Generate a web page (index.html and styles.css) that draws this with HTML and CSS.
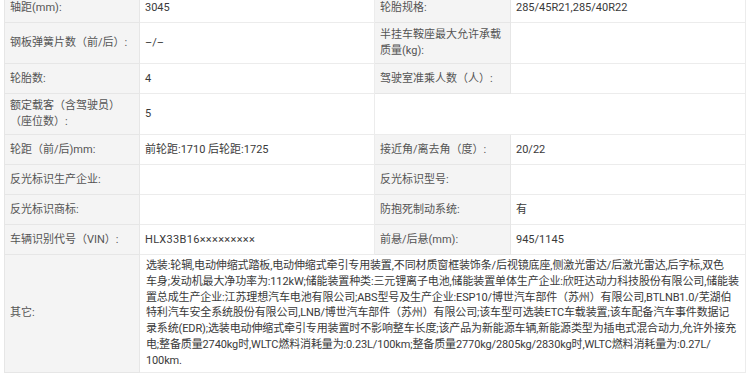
FILE: index.html
```html
<!DOCTYPE html>
<html lang="zh">
<head>
<meta charset="utf-8">
<title>参数</title>
<link rel="stylesheet" href="styles.css">
</head>
<body>
<table class="spec">
  <colgroup>
    <col class="c-label">
    <col class="c-value">
    <col class="c-label2">
    <col class="c-value">
  </colgroup>
  <tr>
    <th>轴距(mm):</th><td>3045</td>
    <th>轮胎规格:</th><td>285/45R21,285/40R22</td>
  </tr>
  <tr>
    <th>钢板弹簧片数（前/后）:</th><td>–/–</td>
    <th>半挂车鞍座最大允许承载质量(kg):</th><td></td>
  </tr>
  <tr>
    <th>轮胎数:</th><td>4</td>
    <th>驾驶室准乘人数（人）:</th><td></td>
  </tr>
  <tr>
    <th>额定载客（含驾驶员）（座位数）:</th><td>5</td>
    <td colspan="2"></td>
  </tr>
  <tr>
    <th>轮距（前/后)mm:</th><td>前轮距:1710 后轮距:1725</td>
    <th>接近角/离去角（度）:</th><td>20/22</td>
  </tr>
  <tr>
    <th>反光标识生产企业:</th><td></td>
    <th>反光标识型号:</th><td></td>
  </tr>
  <tr>
    <th>反光标识商标:</th><td></td>
    <th>防抱死制动系统:</th><td>有</td>
  </tr>
  <tr>
    <th>车辆识别代号（VIN）:</th><td class="vin">HLX33B16×××××××××</td>
    <th>前悬/后悬(mm):</th><td>945/1145</td>
  </tr>
  <tr>
    <th>其它:</th>
    <td colspan="3" class="long">选装:轮辋,电动伸缩式踏板,电动伸缩式牵引专用装置,不同材质窗框装饰条/后视镜底座,侧激光雷达/后激光雷达,后字标,双色<br>车身;发动机最大净功率为:112kW;储能装置种类:三元锂离子电池,储能装置单体生产企业:欣旺达动力科技股份有限公司,储能装<br>置总成生产企业:江苏理想汽车电池有限公司;ABS型号及生产企业:ESP10/博世汽车部件（苏州）有限公司,BTLNB1.0/芜湖伯<br>特利汽车安全系统股份有限公司,LNB/博世汽车部件（苏州）有限公司;该车型可选装ETC车载装置;该车配备汽车事件数据记<br>录系统(EDR);选装电动伸缩式牵引专用装置时不影响整车长度;该产品为新能源车辆,新能源类型为插电式混合动力,允许外接充<br>电;整备质量2740kg时,WLTC燃料消耗量为:0.23L/100km;整备质量2770kg/2805kg/2830kg时,WLTC燃料消耗量为:0.27L/<br>100km.</td>
  </tr>
</table>
</body>
</html>
```
FILE: styles.css
```css
html, body {
  margin: 0;
  padding: 0;
  background: #ffffff;
}

body {
  font-family: Roboto, "Noto Sans CJK SC", sans-serif;
  font-size: 11px;
  color: #333333;
}

.spec {
  margin: -8px 4px 0 4px;
  width: 742px;
  table-layout: fixed;
  border-collapse: collapse;
}

.c-label { width: 135px; }
.c-label2 { width: 136px; }
.c-value { width: 235px; }

.spec th,
.spec td {
  height: 30px;
  box-sizing: border-box;
  padding: 4px 5px;
  line-height: 16px;
  border: 1px solid #ececec;
  text-align: left;
  vertical-align: middle;
  font-weight: normal;
  word-break: break-all;
}

.spec th {
  background: #f4f4f4;
  color: #555555;
  border-color: #e6e6e6;
}

.spec td {
  background: #ffffff;
  color: #3a3a3a;
}

.spec td.vin {
  letter-spacing: 0.3px;
}

.spec td.long {
  line-height: 15.8px;
  padding: 3px 0 3px 6px;
  white-space: nowrap;
  letter-spacing: -0.13px;
}
```
